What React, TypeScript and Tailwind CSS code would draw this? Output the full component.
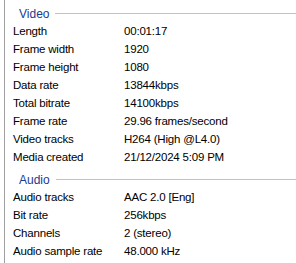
const video: [string, string][] = [
  ["Length", "00:01:17"],
  ["Frame width", "1920"],
  ["Frame height", "1080"],
  ["Data rate", "13844kbps"],
  ["Total bitrate", "14100kbps"],
  ["Frame rate", "29.96 frames/second"],
  ["Video tracks", "H264 (High @L4.0)"],
  ["Media created", "21/12/2024 5:09 PM"],
];

const audio: [string, string][] = [
  ["Audio tracks", "AAC 2.0 [Eng]"],
  ["Bit rate", "256kbps"],
  ["Channels", "2 (stereo)"],
  ["Audio sample rate", "48.000 kHz"],
];

function Section({ title, rows, className }: { title: string; rows: [string, string][]; className?: string }) {
  return (
    <div className={className}>
      <div className="flex h-[19px] items-center pl-[14px]">
        <span className="text-[12px] leading-none text-[#1a3a94]">{title}</span>
        <div className="ml-[6px] h-px flex-1 bg-[#b9c4cc]" />
      </div>
      {rows.map(([k, v]) => (
        <div key={k} className="flex h-[18px] items-center text-[11.5px] leading-none tracking-[-0.2px] text-black">
          <span className="w-[119px] pl-[8px]">{k}</span>
          <span>{v}</span>
        </div>
      ))}
    </div>
  );
}

export default function App() {
  return (
    <div
      className="h-[263px] w-[296px] overflow-hidden bg-white"
      style={{ fontFamily: "'Liberation Sans', Arial, sans-serif" }}
    >
      <div className="ml-[4px] h-full border-l border-[#a0a0a0] pt-[4px]">
        <Section title="Video" rows={video} />
        <Section title="Audio" rows={audio} className="mt-[3px]" />
      </div>
    </div>
  );
}
